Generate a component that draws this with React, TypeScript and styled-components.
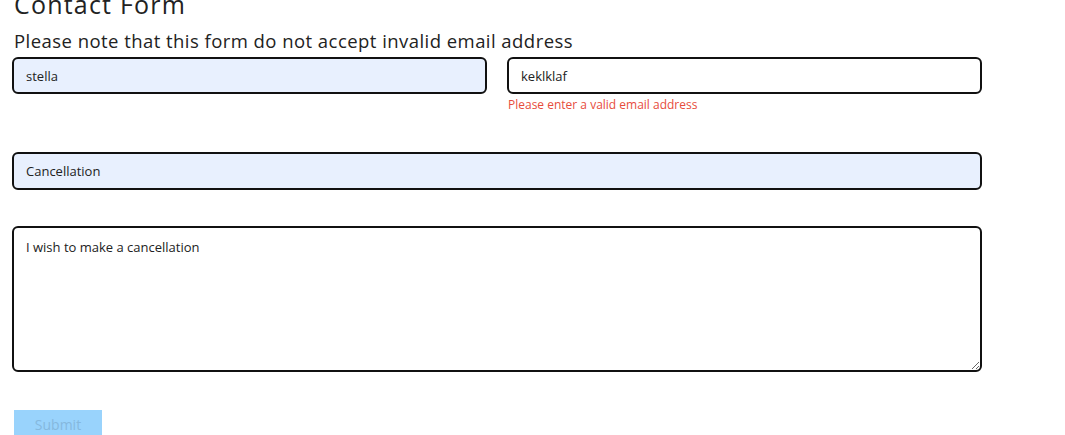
import React from "react";
import styled, { createGlobalStyle } from "styled-components";

const GlobalStyle = createGlobalStyle`
  body {
    margin: 0;
    background: #ffffff;
    font-family: "Open Sans", "Noto Sans", sans-serif;
  }
`;

const Page = styled.div`
  padding: 0 0 0 12px;
  width: 970px;
`;

const Title = styled.h1`
  margin: -13px 0 0 2px;
  font-family: "Open Sans", "Noto Sans", sans-serif;
  font-size: 25px;
  font-weight: 400;
  color: #222;
  line-height: 34px;
  letter-spacing: 1.2px;
`;

const Note = styled.p`
  margin: 8px 0 0 2px;
  font-family: "Open Sans", "Noto Sans", sans-serif;
  font-size: 18.5px;
  color: #222;
  line-height: 24px;
  height: 24px;
  letter-spacing: 0.45px;
`;

const Form = styled.form`
  display: flex;
  flex-direction: column;
  margin-top: 4px;
`;

const Row = styled.div`
  display: grid;
  grid-template-columns: 1fr 1fr;
  column-gap: 20px;
  height: 95px;
`;

const Field = styled.div<{ $height?: number }>`
  display: flex;
  flex-direction: column;
  height: ${(p) => p.$height ?? 74}px;
`;

const Input = styled.input<{ $filled?: boolean; $h?: number }>`
  box-sizing: border-box;
  width: 100%;
  height: ${(p) => p.$h ?? 37}px;
  padding: 0 12px;
  border: 2px solid #111;
  border-radius: 6px;
  background: ${(p) => (p.$filled ? "#e8f0fe" : "#ffffff")};
  font-family: "Open Sans", "Noto Sans", sans-serif;
  font-size: 13px;
  color: #222;
  outline: none;
`;

const Error = styled.span`
  margin: 3px 0 0 1px;
  font-family: "Open Sans", "Noto Sans", sans-serif;
  font-size: 12px;
  color: #e74c3c;
  line-height: 16px;
`;

const Message = styled.textarea`
  box-sizing: border-box;
  width: 100%;
  height: 146px;
  padding: 10px 12px;
  border: 2px solid #111;
  border-radius: 6px;
  background: #fff;
  font-family: "Open Sans", "Noto Sans", sans-serif;
  font-size: 13px;
  color: #222;
  resize: vertical;
  outline: none;
`;

const Submit = styled.button`
  margin: 38px 0 0 2px;
  width: 88px;
  height: 30px;
  border: none;
  background: #99d3fc;
  color: #85b8de;
  font-family: "Open Sans", "Noto Sans", sans-serif;
  font-size: 14px;
  padding: 0 0 2px;
  align-self: flex-start;
`;

export default function App() {
  return (
    <>
      <GlobalStyle />
      <Page>
        <Title>Contact Form</Title>
        <Note>Please note that this form do not accept invalid email address</Note>
        <Form onSubmit={(e) => e.preventDefault()}>
          <Row>
            <Field>
              <Input $filled defaultValue="stella" />
            </Field>
            <Field>
              <Input defaultValue="keklklaf" />
              <Error>Please enter a valid email address</Error>
            </Field>
          </Row>
          <Field $height={74}>
            <Input $filled $h={38} defaultValue="Cancellation" />
          </Field>
          <Message defaultValue="I wish to make a cancellation" />
          <Submit type="submit" disabled>Submit</Submit>
        </Form>
      </Page>
    </>
  );
}
